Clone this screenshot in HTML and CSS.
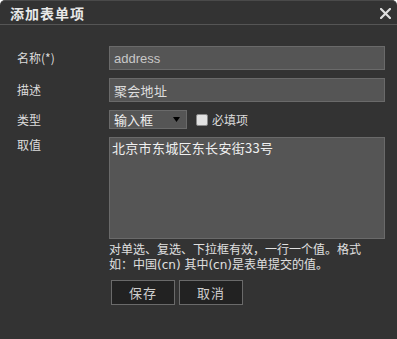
FILE: index.html
```html
<!DOCTYPE html>
<html lang="zh-CN">
<head>
<meta charset="utf-8">
<title>添加表单项</title>
<link rel="stylesheet" href="styles.css">
</head>
<body>
<div class="dialog">
  <div class="titlebar">
    <span class="title">添加表单项</span>
    <span class="close" aria-label="关闭">
      <svg width="11" height="11" viewBox="0 0 11 11"><path d="M1 1 L10 10 M10 1 L1 10" stroke="#dedede" stroke-width="2.2" stroke-linecap="square"/></svg>
    </span>
  </div>
  <div class="form">
    <label class="lbl">名称(*)</label>
    <input class="input latin" type="text" value="address">

    <label class="lbl">描述</label>
    <input class="input" type="text" value="聚会地址">

    <label class="lbl">类型</label>
    <div class="typerow">
      <div class="select">
        <span>输入框</span>
        <svg class="arrow" width="7" height="5" viewBox="0 0 7 5"><path d="M0 0 H7 L3.5 5 Z" fill="#000"/></svg>
      </div>
      <span class="check"><span class="box"></span>必填项</span>
    </div>

    <label class="lbl lbl-top">取值</label>
    <div class="valuecol">
      <textarea class="area">北京市东城区东长安街33号</textarea>
      <p class="help">对单选、复选、下拉框有效，一行一个值。格式如：中国(cn) 其中(cn)是表单提交的值。</p>
      <div class="buttons">
        <button class="btn">保存</button>
        <button class="btn">取消</button>
      </div>
    </div>
  </div>
</div>
</body>
</html>
```
FILE: styles.css
```css
html, body {
  margin: 0;
  padding: 0;
  background: #ffffff;
}
body {
  font-family: "Liberation Sans", "Noto Sans CJK SC", sans-serif;
}
.dialog {
  width: 397px;
  height: 339px;
  box-sizing: border-box;
  background: #333333;
  border-radius: 5px 5px 0 0;
  border-top: 1px solid #4a4a4a;
  overflow: hidden;
}
.titlebar {
  height: 23px;
  border-bottom: 1px solid #555555;
  display: flex;
  align-items: center;
  justify-content: space-between;
  padding: 0 6px 0 10px;
}
.title {
  font-family: "Noto Sans CJK SC", sans-serif;
  font-weight: bold;
  font-size: 14px;
  letter-spacing: 1px;
  color: #e8e8e8;
  line-height: 16px;
  margin-top: 1px;
}
.close {
  display: flex;
  width: 11px;
  height: 11px;
  margin-top: 1px;
}
.form {
  display: grid;
  grid-template-columns: 92px 276px;
  row-gap: 8px;
  padding: 21px 0 0 17px;
}
.lbl {
  font-family: "Noto Sans CJK SC", sans-serif;
  font-size: 12px;
  color: #dcdcdc;
  align-self: center;
  line-height: 16px;
}
.lbl-top {
  align-self: start;
  padding-top: 0;
}
.input {
  box-sizing: border-box;
  width: 276px;
  height: 24px;
  margin: 0;
  padding: 0 4px;
  background: #555555;
  border: 1px solid #6a6a6a;
  color: #dddddd;
  font-family: "Noto Sans CJK SC", sans-serif;
  font-size: 13px;
  letter-spacing: 0.3px;
  outline: none;
}
.input.latin {
  font-family: "Liberation Sans", sans-serif;
  color: #c8c8c8;
  letter-spacing: 0;
}
.typerow {
  display: flex;
  align-items: center;
  gap: 9px;
}
.select {
  box-sizing: border-box;
  width: 78px;
  height: 19px;
  background: #555555;
  border: 1px solid #6a6a6a;
  display: flex;
  align-items: center;
  justify-content: space-between;
  padding: 0 6px 0 4px;
  font-family: "Noto Sans CJK SC", sans-serif;
  font-size: 13px;
  color: #f0f0f0;
}
.arrow {
  display: block;
}
.check {
  display: flex;
  align-items: center;
  gap: 4px;
  font-family: "Noto Sans CJK SC", sans-serif;
  font-size: 12px;
  color: #dcdcdc;
}
.box {
  box-sizing: border-box;
  width: 12px;
  height: 12px;
  background: #e2e2e2;
  border: 1px solid #8a8a8a;
  border-radius: 2px;
}
.valuecol {
  display: flex;
  flex-direction: column;
  align-items: flex-start;
}
.area {
  box-sizing: border-box;
  width: 276px;
  height: 102px;
  margin: 0;
  padding: 1px 2px;
  background: #555555;
  border: 1px solid #6a6a6a;
  color: #f0f0f0;
  font-family: "Noto Sans CJK SC", sans-serif;
  font-size: 13px;
  line-height: 18px;
  letter-spacing: 0.3px;
  resize: none;
  outline: none;
  display: block;
}
.help {
  width: 262px;
  margin: 4px 0 0 0;
  font-family: "DejaVu Sans", "Noto Sans CJK SC", sans-serif;
  font-size: 12px;
  line-height: 15px;
  color: #e0e0e0;
}
.buttons {
  display: flex;
  gap: 4px;
  margin: 7px 0 0 2px;
}
.btn {
  box-sizing: border-box;
  width: 64px;
  height: 25px;
  margin: 0;
  padding: 0;
  background: #222222;
  border: 1px solid #6a6a6a;
  color: #cfcfcf;
  font-family: "Noto Sans CJK SC", sans-serif;
  font-size: 13px;
  letter-spacing: 1px;
}
```
